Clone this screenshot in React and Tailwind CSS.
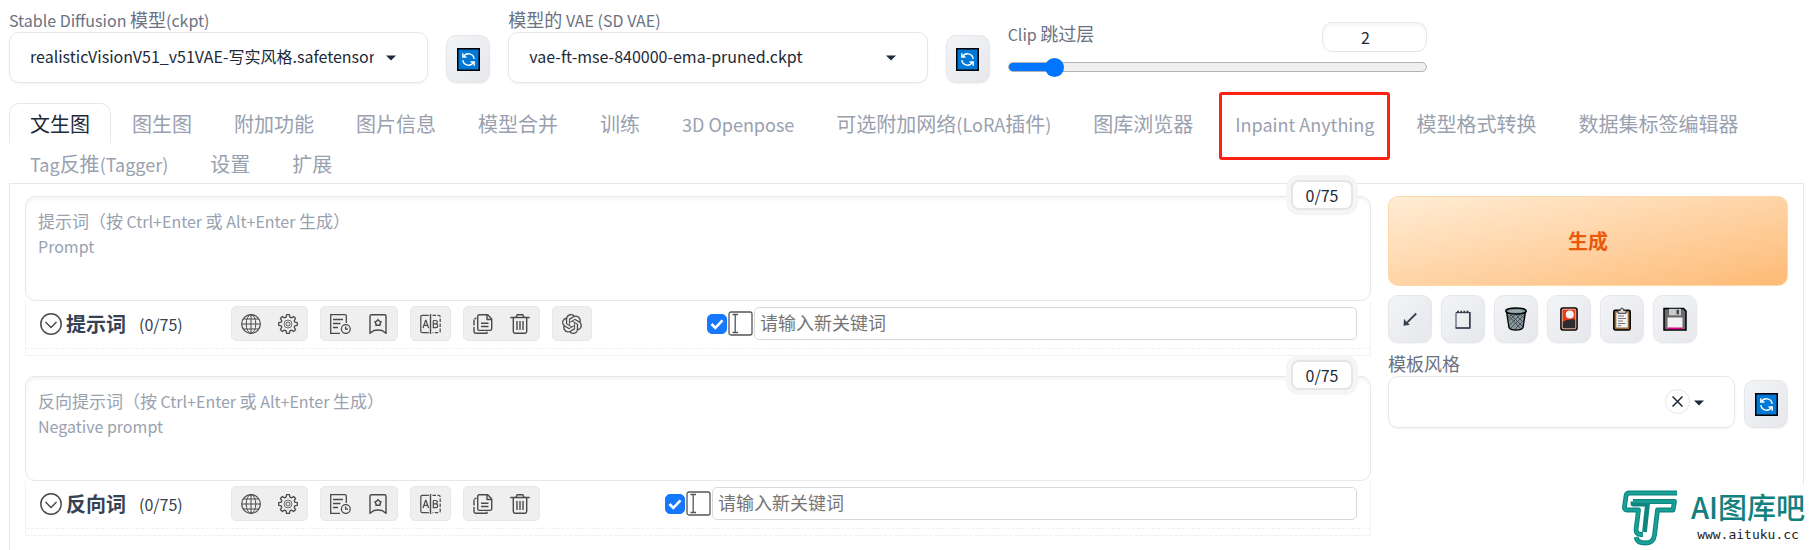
import { useState } from 'react'
import { SiOpenai } from 'react-icons/si'

const TABS = [
  '文生图', '图生图', '附加功能', '图片信息', '模型合并', '训练', '3D Openpose',
  '可选附加网络(LoRA插件)', '图库浏览器', 'Inpaint Anything', '模型格式转换',
  '数据集标签编辑器', 'Tag反推(Tagger)', '设置', '扩展',
]

const toolButton = 'flex h-12 w-11 shrink-0 items-center justify-center rounded-[10px] border border-gray-200 bg-gradient-to-br from-gray-100 to-gray-200 text-gray-700 shadow-xs'

// Latin runs are set one step smaller than the Chinese characters around them
function Mixed({ text, latin }) {
  return text.split(/([\x20-\x7e]+)/).filter(Boolean).map((part, i) => (
    /^[\x20-\x7e]/.test(part)
      ? <span key={i} className={`whitespace-pre ${latin}`}>{part}</span>
      : part
  ))
}

function Caret({ className }) {
  return (
    <svg viewBox="0 0 10 6" className={`pointer-events-none absolute h-[6px] w-[10px] fill-gray-800 ${className}`}>
      <path d="M0 0.5h10L5 5.5z" />
    </svg>
  )
}

function RefreshButton({ label }) {
  return (
    <button type="button" aria-label={label} className={toolButton}>
      <svg viewBox="0 0 23 23" className="size-[23px]">
        <rect x="0.75" y="0.75" width="21.5" height="21.5" fill="#0078d7" stroke="#000" strokeWidth="1.5" />
        <g fill="none" stroke="#fff" strokeWidth="1.4">
          <path d="M6.4 8.8a5.8 5.8 0 0 1 10.8 2" />
          <path d="M16.6 14.2a5.8 5.8 0 0 1-10.8-2" />
          <path d="M5.8 5.3v3.7h3.7M17.2 17.7V14h-3.7" />
        </g>
      </svg>
    </button>
  )
}

function ModelSelect({ id, label, value }) {
  return (
    <div className="min-w-0 flex-1">
      <label htmlFor={id} className="mb-0.5 block h-[22px] text-[18px] leading-[22px] text-gray-500">
        <Mixed text={label} latin="text-[16px]" />
      </label>
      <div className="relative">
        <select id={id} className="block h-[51px] w-full appearance-none rounded-[10px] border border-gray-200 bg-white pr-[53px] pb-1 pl-5 text-[16px] text-gray-800 shadow-xs">
          <option>{value}</option>
        </select>
        <Caret className="top-[23px] right-[32px]" />
      </div>
    </div>
  )
}

function ClipSkip() {
  const [value, setValue] = useState(2)
  const fill = `${((value - 1) / 11) * 96 + 2}%`

  return (
    <div className="min-w-0 flex-1 pb-[11px]">
      <div className="mb-[10px] flex justify-between">
        <label htmlFor="clip" className="text-[18px] leading-[22px] text-gray-500">
          <Mixed text="Clip 跳过层" latin="text-[16px]" />
        </label>
        <input
          type="number"
          aria-label="Clip 跳过层"
          value={value}
          onChange={(e) => setValue(e.target.value)}
          className="h-[30px] w-[105px] rounded-[10px] border border-gray-200 pr-[18px] text-center text-[16px] text-gray-800 shadow-[inset_0_2px_4px_rgba(0,0,0,0.05)] [&::-webkit-inner-spin-button]:appearance-none"
        />
      </div>
      <input
        id="clip"
        type="range"
        min="1"
        max="12"
        value={value}
        onChange={(e) => setValue(e.target.value)}
        style={{ backgroundImage: `linear-gradient(to right, #0075ff ${fill}, #efefef ${fill})` }}
        className="block h-[10px] w-full appearance-none rounded-full border border-[#b2b2b2] [&::-webkit-slider-thumb]:size-[19px] [&::-webkit-slider-thumb]:appearance-none [&::-webkit-slider-thumb]:rounded-full [&::-webkit-slider-thumb]:bg-[#0075ff]"
      />
    </div>
  )
}

function Tab({ name, active }) {
  return (
    <button
      type="button"
      role="tab"
      aria-selected={active}
      className={`relative h-10 rounded-t-[10px] border border-b-0 px-5 text-[20px] leading-7 ${active ? 'border-gray-200 text-gray-800' : 'border-transparent text-gray-400'}`}
    >
      <Mixed text={name} latin="text-[18px]" />
      {name === 'Inpaint Anything' && (
        <span className="absolute -top-3 right-1 -bottom-[17px] left-1 rounded-[3px] border-3 border-[#ff2014]" />
      )}
    </button>
  )
}

const GlobeIcon = () => (
  <svg viewBox="0 0 20 20" className="size-5" fill="none" stroke="currentColor" strokeWidth="1">
    <circle cx="10" cy="10" r="9.3" strokeWidth="1.2" />
    <ellipse cx="10" cy="10" rx="4.8" ry="9.3" />
    <path d="M10 0.7v18.6M0.7 10h18.6M2.4 5h15.2M2.4 15h15.2" />
  </svg>
)

const GearIcon = () => (
  <svg viewBox="0 0 20 20" className="size-5" fill="none" stroke="currentColor" strokeLinejoin="round">
    <path strokeWidth="1.3" d="M8.6 .7h2.8l.5 2.5 1.6.7 2.1-1.4 2 2-1.4 2.1.6 1.6 2.5.5v2.6l-2.5.5-.6 1.6 1.4 2.1-2 2-2.1-1.4-1.6.7-.5 2.5H8.6l-.5-2.5-1.6-.7-2.1 1.4-2-2 1.4-2.1-.6-1.6-2.5-.5V8.7l2.5-.5.6-1.6-1.4-2.1 2-2 2.1 1.4 1.6-.7z" />
    <circle cx="10" cy="10" r="4" strokeWidth="0.8" />
    <circle cx="10" cy="10" r="2" strokeWidth="0.9" />
  </svg>
)

const HistoryIcon = () => (
  <svg viewBox="0 0 21 20" className="h-5 w-[21px]" fill="none" stroke="currentColor" strokeWidth="1.3">
    <path d="M16.3 9V2.2q0-1.5-1.5-1.5H.7v18.6H10" />
    <path d="M3 5.5h10M3 9.5h7.5M3 13.5h5" />
    <circle cx="15.8" cy="15" r="4.4" />
    <path d="M15.6 12.6v2.6h2.4" />
  </svg>
)

const BookmarkIcon = () => (
  <svg viewBox="-1 0 20 20" className="size-5" fill="none" stroke="currentColor">
    <path strokeWidth="1.4" d="M1 19.3V2.2Q1 .8 2.4 .8h13.2q1.4 0 1.4 1.4v17.1l-4-2.8q-4-1-8 0z" />
    <path strokeWidth="1.5" strokeLinejoin="round" d="m9 6 2.7 2-1 3.2H7.3l-1-3.2z" />
    <path strokeWidth="1" d="M9 6V4.8M11.7 8l1.1-.4M10.7 11.2l.6 1M7.3 11.2l-.6 1M6.3 8l-1.1-.4" />
  </svg>
)

const TranslateIcon = () => (
  <svg viewBox="0 0 21 20" className="h-5 w-[21px]" fill="none" stroke="currentColor" strokeWidth="1.2">
    <path d="M8.8 1.3H2.6Q.8 1.3.8 3.1v13.8q0 1.8 1.8 1.8h6.2" />
    <path d="M10.5 0v20" strokeWidth="1.4" />
    <path strokeDasharray="3.5 1.5" d="M12.5 1.3h6q1.7 0 1.7 1.8v13.8q0 1.8-1.7 1.8h-6" />
    <path d="M3 14 5.6 6.3h.4L8.6 14M3.9 11.4h3.8M13.3 6.5v7.2h2.2q2.2 0 2.2-1.9t-2.2-1.9h-2.2M15.3 9.9q2 0 2-1.7t-2-1.7h-2" />
  </svg>
)

const CopyIcon = () => (
  <svg viewBox="0 0 20 20" className="size-5" fill="none" stroke="currentColor" strokeWidth="1.4" strokeLinejoin="round">
    <path d="M6.3 .8h8.4L18.7 5v9.7q0 1.7-1.7 1.7H6.3q-1.6 0-1.6-1.7V2.5Q4.7 .8 6.3 .8z" />
    <path d="M14 1v4.5h4.5M8 9.2h7.5M8 12.5h7.5" />
    <path strokeDasharray="2 1.5 6 1.5 20" d="M3.5 4.5H1v13q0 1.7 1.7 1.7H14v-1.5" />
  </svg>
)

const TrashIcon = () => (
  <svg viewBox="0 0 20 20" className="size-5" fill="none" stroke="currentColor" strokeWidth="1.4">
    <path d="M.3 3.5h19.4M6 3.3 7.2.8h5.6L14 3.3M3.3 3.5v14q0 1.7 1.7 1.7h10q1.7 0 1.7-1.7v-14" />
    <path d="M7 7v9M10 7v9M13 7v9" />
  </svg>
)

const GROUPS = [
  [['语言', GlobeIcon], ['设置', GearIcon]],
  [['历史', HistoryIcon], ['收藏', BookmarkIcon]],
  [['翻译', TranslateIcon]],
  [['复制', CopyIcon], ['清空', TrashIcon]],
]

const CHAT = [['ChatGPT', () => <SiOpenai className="size-5" />]]

function PromptBox({ id, title, hint, groups, keywordWidth }) {
  const [text, setText] = useState('')

  return (
    <div className="relative">
      <textarea
        id={id}
        aria-label={title}
        value={text}
        onChange={(e) => setText(e.target.value)}
        className="block h-[105px] w-full resize-none rounded-[10px] border border-gray-200 bg-white px-3 py-3 text-[16px] leading-[25px] text-gray-800 shadow-[inset_0_2px_4px_rgba(0,0,0,0.05)]"
      />
      {!text && (
        <div className="pointer-events-none absolute top-3 left-[13px] text-[17px] leading-[25px] text-gray-400">
          {hint.map((line) => <p key={line} className="h-[25px]"><Mixed text={line} latin="text-[16px]" /></p>)}
        </div>
      )}
      <span className="absolute -top-4 right-[18px] flex h-[30px] w-[62px] items-center justify-center rounded-lg border-2 border-[#e5e5e5] bg-white text-[16px] text-gray-800 ring-5 ring-[#f5f5f5]">
        0/75
      </span>
      <div className="border border-t-0 border-[#f3f3f3] pb-[6px]">
        <div className="flex h-12 items-center border-b border-dashed border-[#f0f0f0] pr-[13px] pb-0.5 pl-[14px]">
          <button type="button" aria-label={`收起${title}`} className="mr-1 text-[#4a4a4a]">
            <svg viewBox="0 0 22 22" className="size-[22px]" fill="none" stroke="currentColor" strokeWidth="1.5">
              <circle cx="11" cy="11" r="10.2" />
              <path d="m5.5 9 5.5 5.5L16.5 9" />
            </svg>
          </button>
          <span className="w-[73px] text-[20px] leading-7 font-bold text-gray-700">{title}</span>
          <span className="w-[92px] text-[16px] text-gray-700">(0/75)</span>
          <div className="flex gap-3">
            {groups.map((group, i) => (
              <div key={i} className="flex h-[35px] items-center gap-[17px] rounded-[5px] border border-[#e6e6e6] bg-[#efefef] px-[9px] text-[#4a4a4a]">
                {group.map(([name, Icon]) => (
                  <button key={name} type="button" aria-label={name}><Icon /></button>
                ))}
              </div>
            ))}
          </div>
          <div className={`ml-auto flex items-center ${keywordWidth}`}>
            <label className="relative mr-px block size-5 shrink-0">
              <input type="checkbox" defaultChecked aria-label="启用关键词输入" className="block size-5 appearance-none rounded-[5px] border border-gray-300 checked:border-[#1677ff] checked:bg-[#1677ff]" />
              <svg viewBox="0 0 20 20" className="pointer-events-none absolute inset-0 size-5" fill="none" stroke="#fff" strokeWidth="2.6">
                <path d="m4.5 10 3.8 3.8 7.2-7.4" />
              </svg>
            </label>
            <svg viewBox="0 0 25 25" className="mr-px size-[25px] shrink-0" fill="none" stroke="#555" strokeWidth="1.3">
              <rect x="1" y="1" width="23" height="23" rx="2" />
              <path d="M4.5 3.5h5.5M4.5 21.5h5.5M7.2 3.5v18" />
            </svg>
            <input
              type="text"
              aria-label="新关键词"
              placeholder="请输入新关键词"
              className="h-[33px] min-w-0 flex-1 rounded-[5px] border border-[#d9d9d9] px-[5px] pb-[3px] text-[18px] leading-6 placeholder:text-[#757575]"
            />
          </div>
        </div>
      </div>
    </div>
  )
}

const ACTIONS = [
  ['读取参数', (
    <svg viewBox="0 0 24 24" className="size-6" fill="none" stroke="#374151" strokeWidth="1.9">
      <path d="M18.2 6.5 8 16.7" />
      <path d="M5.5 18.8 6 11.8l2.6 3.2 3.4 2.8z" fill="#374151" stroke="none" />
    </svg>
  )],
  ['记事本', (
    <svg viewBox="0 0 24 24" className="size-6" fill="none" stroke="#374151">
      <path strokeWidth="1" d="M5 5.5h13.5v15.5H5z" />
      <path strokeWidth="1.5" d="M19 5v16.5M4.5 21H19.5" />
      <path strokeWidth="2.5" strokeDasharray="2 1.2" d="M6 5h12" />
    </svg>
  )],
  ['清空', (
    <svg viewBox="0 0 24 24" className="size-6">
      <path d="M2.5 4.5 5 20.5q1 2.5 7 2.5t7-2.5l2.5-16z" fill="#87979d" stroke="#000" strokeWidth="1.4" />
      <path d="m4 8 13 14M7 8l12 12M12 8l8 8M17 8l3 3M20 8 7 21M16 8 5.5 18M11 8l-6.5 6M7 8l-3 3M19 14l-8 8" stroke="#3c484d" strokeWidth="0.9" fill="none" />
      <ellipse cx="12" cy="4" rx="10.3" ry="3" fill="#72848c" stroke="#000" strokeWidth="1.4" />
      <ellipse cx="12" cy="4.2" rx="8" ry="1.6" fill="#9baab0" />
    </svg>
  )],
  ['显示卡片', (
    <svg viewBox="0 0 24 24" className="size-6">
      <rect x="4" y="1" width="16" height="22" rx="2" fill="#f03a17" stroke="#000" strokeWidth="1.6" />
      <path d="M5.5 15q5-3.5 13-2.5V21.5h-13z" fill="#2d2d2d" />
      <rect x="5.2" y="2.2" width="13.6" height="19.6" rx="1" fill="none" stroke="#d8d8d8" strokeWidth="0.8" />
      <circle cx="12.8" cy="7.5" r="4" fill="#f4f4f4" />
    </svg>
  )],
  ['应用样式', (
    <svg viewBox="0 0 24 24" className="size-6">
      <rect x="3.8" y="3.2" width="16.4" height="19.8" rx="1.5" fill="#9a6b3c" stroke="#000" strokeWidth="1.5" />
      <path d="M6.3 5.5h11.4v15H6.3z" fill="#f3f3f3" />
      <path d="M8 6.3V3.5h2.2Q10.5 1 12 1t1.8 2.5H16v2.8z" fill="#d5d8da" stroke="#333" strokeWidth="1" />
      <path d="M8 9h6M8 11.5h8M8 14h5M8 16.5h7.5M8 18.7h3" stroke="#777" strokeWidth="1" />
    </svg>
  )],
  ['保存样式', (
    <svg viewBox="0 0 24 24" className="size-6">
      <path d="M1 1.5h19.5L23 4v19H1z" fill="#6a6a6a" stroke="#000" strokeWidth="1.5" />
      <path d="M6 1.8h12v6.5H6z" fill="#c9ccce" />
      <path d="M13.5 2.8h2.5v4.5h-2.5z" fill="#444" />
      <path d="M4.5 10.5h15V22h-15z" fill="#f2f2f2" />
      <path d="M4.5 20.5h15v1.7h-15z" fill="#e3008c" />
    </svg>
  )],
]

function Sidebar() {
  return (
    <div className="w-[400px] shrink-0">
      <button type="button" className="block h-[90px] w-full rounded-[10px] border border-[#fed7aa] bg-gradient-to-br from-[#ffedd5] to-[#fdba74] text-[20px] font-bold text-[#ea580c]">
        生成
      </button>
      <div className="mt-[9px] flex gap-[9px]">
        {ACTIONS.map(([name, icon]) => (
          <button key={name} type="button" aria-label={name} className={toolButton}>{icon}</button>
        ))}
      </div>
      <label htmlFor="styles" className="mt-2 block text-[18px] leading-[25px] text-gray-500">模板风格</label>
      <div className="flex items-end gap-[9px]">
        <div className="relative min-w-0 flex-1">
          <input id="styles" type="text" className="block h-[52px] w-full rounded-[10px] border border-gray-200 px-5 text-[16px] shadow-xs" />
          <button type="button" aria-label="清除" className="absolute top-[13px] right-[45px] flex size-[25px] items-center justify-center rounded-full border border-gray-200 bg-white">
            <svg viewBox="0 0 11 11" className="size-[11px]" stroke="#1f2937" strokeWidth="1.5">
              <path d="m.5.5 10 10M10.5.5l-10 10" />
            </svg>
          </button>
          <Caret className="top-[24px] right-[31px]" />
        </div>
        <RefreshButton label="刷新模板风格" />
      </div>
    </div>
  )
}

function Watermark() {
  return (
    <div className="absolute right-[11px] bottom-0 flex h-[65px] items-end gap-[13px] bg-white pl-4">
      <svg viewBox="0 0 56 56" className="mb-1 size-14" fill="none" strokeLinejoin="round">
        <g stroke="#0f857f" strokeWidth="4.8">
          <path d="M55 3H7.5Q4.5 3 4 6L2.5 17Q2.3 20 5 20H16.5l-2.5 20q0 4 5 4.5h2" />
          <path d="M11 11.5H52.5L51 20H35.5L32.5 45q-1 8-9 8-8.5 0-9.500-6" />
          <path d="M11 11.5v2.5h14.5l-3 28" />
        </g>
        <g stroke="#17a197" strokeWidth="2.6">
          <path d="M55 3H7.5Q4.5 3 4 6L2.5 17Q2.3 20 5 20H16.5l-2.5 20q0 4 5 4.5h2" />
          <path d="M11 11.5H52.5L51 20H35.5L32.5 45q-1 8-9 8-8.5 0-9.500-6" />
        </g>
      </svg>
      <div className="flex flex-col items-center pb-2">
        <span className="text-[29px] leading-[42px] font-medium text-[#12807c]">AI图库吧</span>
        <span className="font-['DejaVu_Sans_Mono',monospace] text-[13px] leading-[15px] text-[#222]">www.aituku.cc</span>
      </div>
    </div>
  )
}

export default function App() {
  return (
    <div className="relative flex min-h-screen flex-col bg-white pt-2 pr-3 pl-[9px] font-['Noto_Sans_CJK_SC',sans-serif]">
      <div className="flex max-w-[1418px] items-end gap-[18px]">
        <ModelSelect id="ckpt" label="Stable Diffusion 模型(ckpt)" value="realisticVisionV51_v51VAE-写实风格.safetensors" />
        <RefreshButton label="刷新模型" />
        <ModelSelect id="vae" label="模型的 VAE (SD VAE)" value="vae-ft-mse-840000-ema-pruned.ckpt" />
        <RefreshButton label="刷新 VAE" />
        <ClipSkip />
      </div>

      <div role="tablist" className="mt-5 flex flex-wrap">
        {TABS.map((name, i) => <Tab key={name} name={name} active={i === 0} />)}
      </div>

      <div className="flex flex-1 gap-[17px] border border-b-0 border-gray-200 px-[15px] pt-3">
        <div className="flex min-w-0 flex-1 flex-col gap-5">
          <PromptBox
            id="prompt"
            title="提示词"
            hint={['提示词（按 Ctrl+Enter 或 Alt+Enter 生成）', 'Prompt']}
            groups={[...GROUPS, CHAT]}
            keywordWidth="w-[650px]"
          />
          <PromptBox
            id="negative"
            title="反向词"
            hint={['反向提示词（按 Ctrl+Enter 或 Alt+Enter 生成）', 'Negative prompt']}
            groups={GROUPS}
            keywordWidth="w-[692px]"
          />
        </div>
        <Sidebar />
      </div>

      <Watermark />
    </div>
  )
}
